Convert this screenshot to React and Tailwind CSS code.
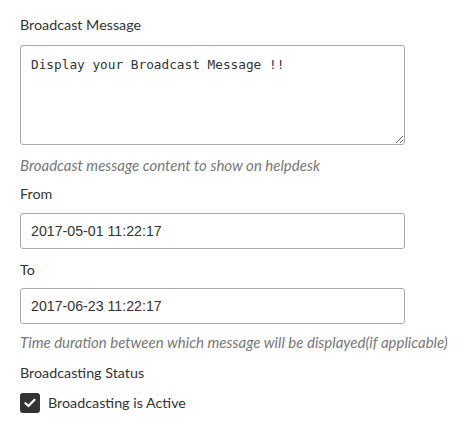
export default function App() {
  const label = "block text-[14.3px] leading-[20px] text-[#333] font-['Lato','Open_Sans',sans-serif]"
  const hint = "text-[15px] leading-[20px] italic text-[#777] font-['Lato','Open_Sans',sans-serif]"
  const input = "block w-[385px] h-[36px] rounded-[3px] border border-[#aaa] px-[10px] text-[14.2px] text-[#333] font-['Liberation_Sans',Arial,sans-serif] bg-white"

  return (
    <div className="w-[468px] h-[433px] bg-white pl-[20px] pt-[15px] font-['Lato',sans-serif]">
      <label className={label}>Broadcast Message</label>
      <textarea
        className="mt-[10px] block w-[385px] h-[100px] rounded-[3px] border border-[#aaa] px-[10px] pt-[10px] pb-[8px] text-[12.75px] leading-[18px] text-[#333] font-['DejaVu_Sans_Mono',monospace] resize-y"
        defaultValue="Display your Broadcast Message !!"
      />
      <p className={`${hint} mt-[10px]`}>Broadcast message content to show on helpdesk</p>

      <label className={`${label} mt-[9px]`}>From</label>
      <input className={`${input} mt-[9px]`} defaultValue="2017-05-01 11:22:17" />

      <label className={`${label} mt-[11px]`}>To</label>
      <input className={`${input} mt-[8px]`} defaultValue="2017-06-23 11:22:17" />

      <p className={`${hint} mt-[8px]`}>Time duration between which message will be displayed(if applicable)</p>

      <label className={`${label} mt-[11px]`}>Broadcasting Status</label>
      <div className="mt-[10px] flex items-center gap-[8px]">
        <span className="flex h-[20px] w-[20px] items-center justify-center rounded-[3px] bg-[#333]">
          <svg width="12" height="10" viewBox="0 0 12 10">
            <path d="M1.5 5.2 L4.5 8 L10.5 1.8" fill="none" stroke="#fff" strokeWidth="2.2" strokeLinecap="round" strokeLinejoin="round" />
          </svg>
        </span>
        <span className="text-[14.3px] leading-[20px] text-[#333] font-['Lato',sans-serif]">Broadcasting is Active</span>
      </div>
    </div>
  )
}
